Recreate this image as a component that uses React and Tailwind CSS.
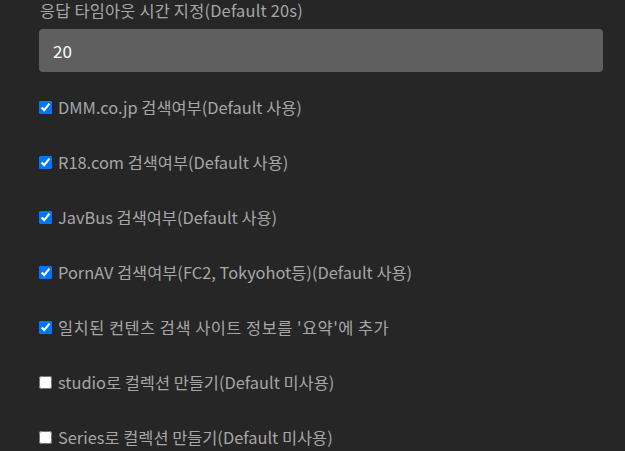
import { useState } from "react";

const options = [
  { label: "DMM.co.jp 검색여부(Default 사용)", on: true },
  { label: "R18.com 검색여부(Default 사용)", on: true },
  { label: "JavBus 검색여부(Default 사용)", on: true },
  { label: "PornAV 검색여부(FC2, Tokyohot등)(Default 사용)", on: true },
  { label: "일치된 컨텐츠 검색 사이트 정보를 '요약'에 추가", on: true, wide: true },
  { label: "studio로 컬렉션 만들기(Default 미사용)", on: false },
  { label: "Series로 컬렉션 만들기(Default 미사용)", on: false },
];

export default function App() {
  const [timeout, setTimeoutValue] = useState("20");
  const [checks, setChecks] = useState(options.map((o) => o.on));

  return (
    <div
      className="w-[625px] h-[451px] overflow-hidden bg-[#262626] pl-[39px] pr-[22px] text-[16.4px] text-[#a6a6a6]"
      style={{ fontFamily: '"Noto Sans CJK KR", "Noto Sans", sans-serif' }}
    >
      {/* timeout field */}
      <label className="block leading-[20px] pl-[1px] tracking-[0.2px]">응답 타임아웃 시간 지정(Default 20s)</label>
      <input
        value={timeout}
        onChange={(e) => setTimeoutValue(e.target.value)}
        className="mt-[9px] block w-[564px] h-[43px] rounded-[4px] bg-[#5f5f5f] px-[14px] text-[17px] text-white outline-none"
      />

      {/* checkbox list */}
      <div className="mt-[24px] flex flex-col gap-[33px]">
        {options.map((o, i) => (
          <label key={i} className="flex items-center h-[22px] gap-[6px]">
            <input
              type="checkbox"
              checked={checks[i]}
              onChange={() => setChecks(checks.map((c, j) => (j === i ? !c : c)))}
              className="m-0 w-[13px] h-[13px] accent-[#0075ff]"
            />
            <span className={o.wide ? "tracking-[0.5px]" : ""}>{o.label}</span>
          </label>
        ))}
      </div>
    </div>
  );
}
